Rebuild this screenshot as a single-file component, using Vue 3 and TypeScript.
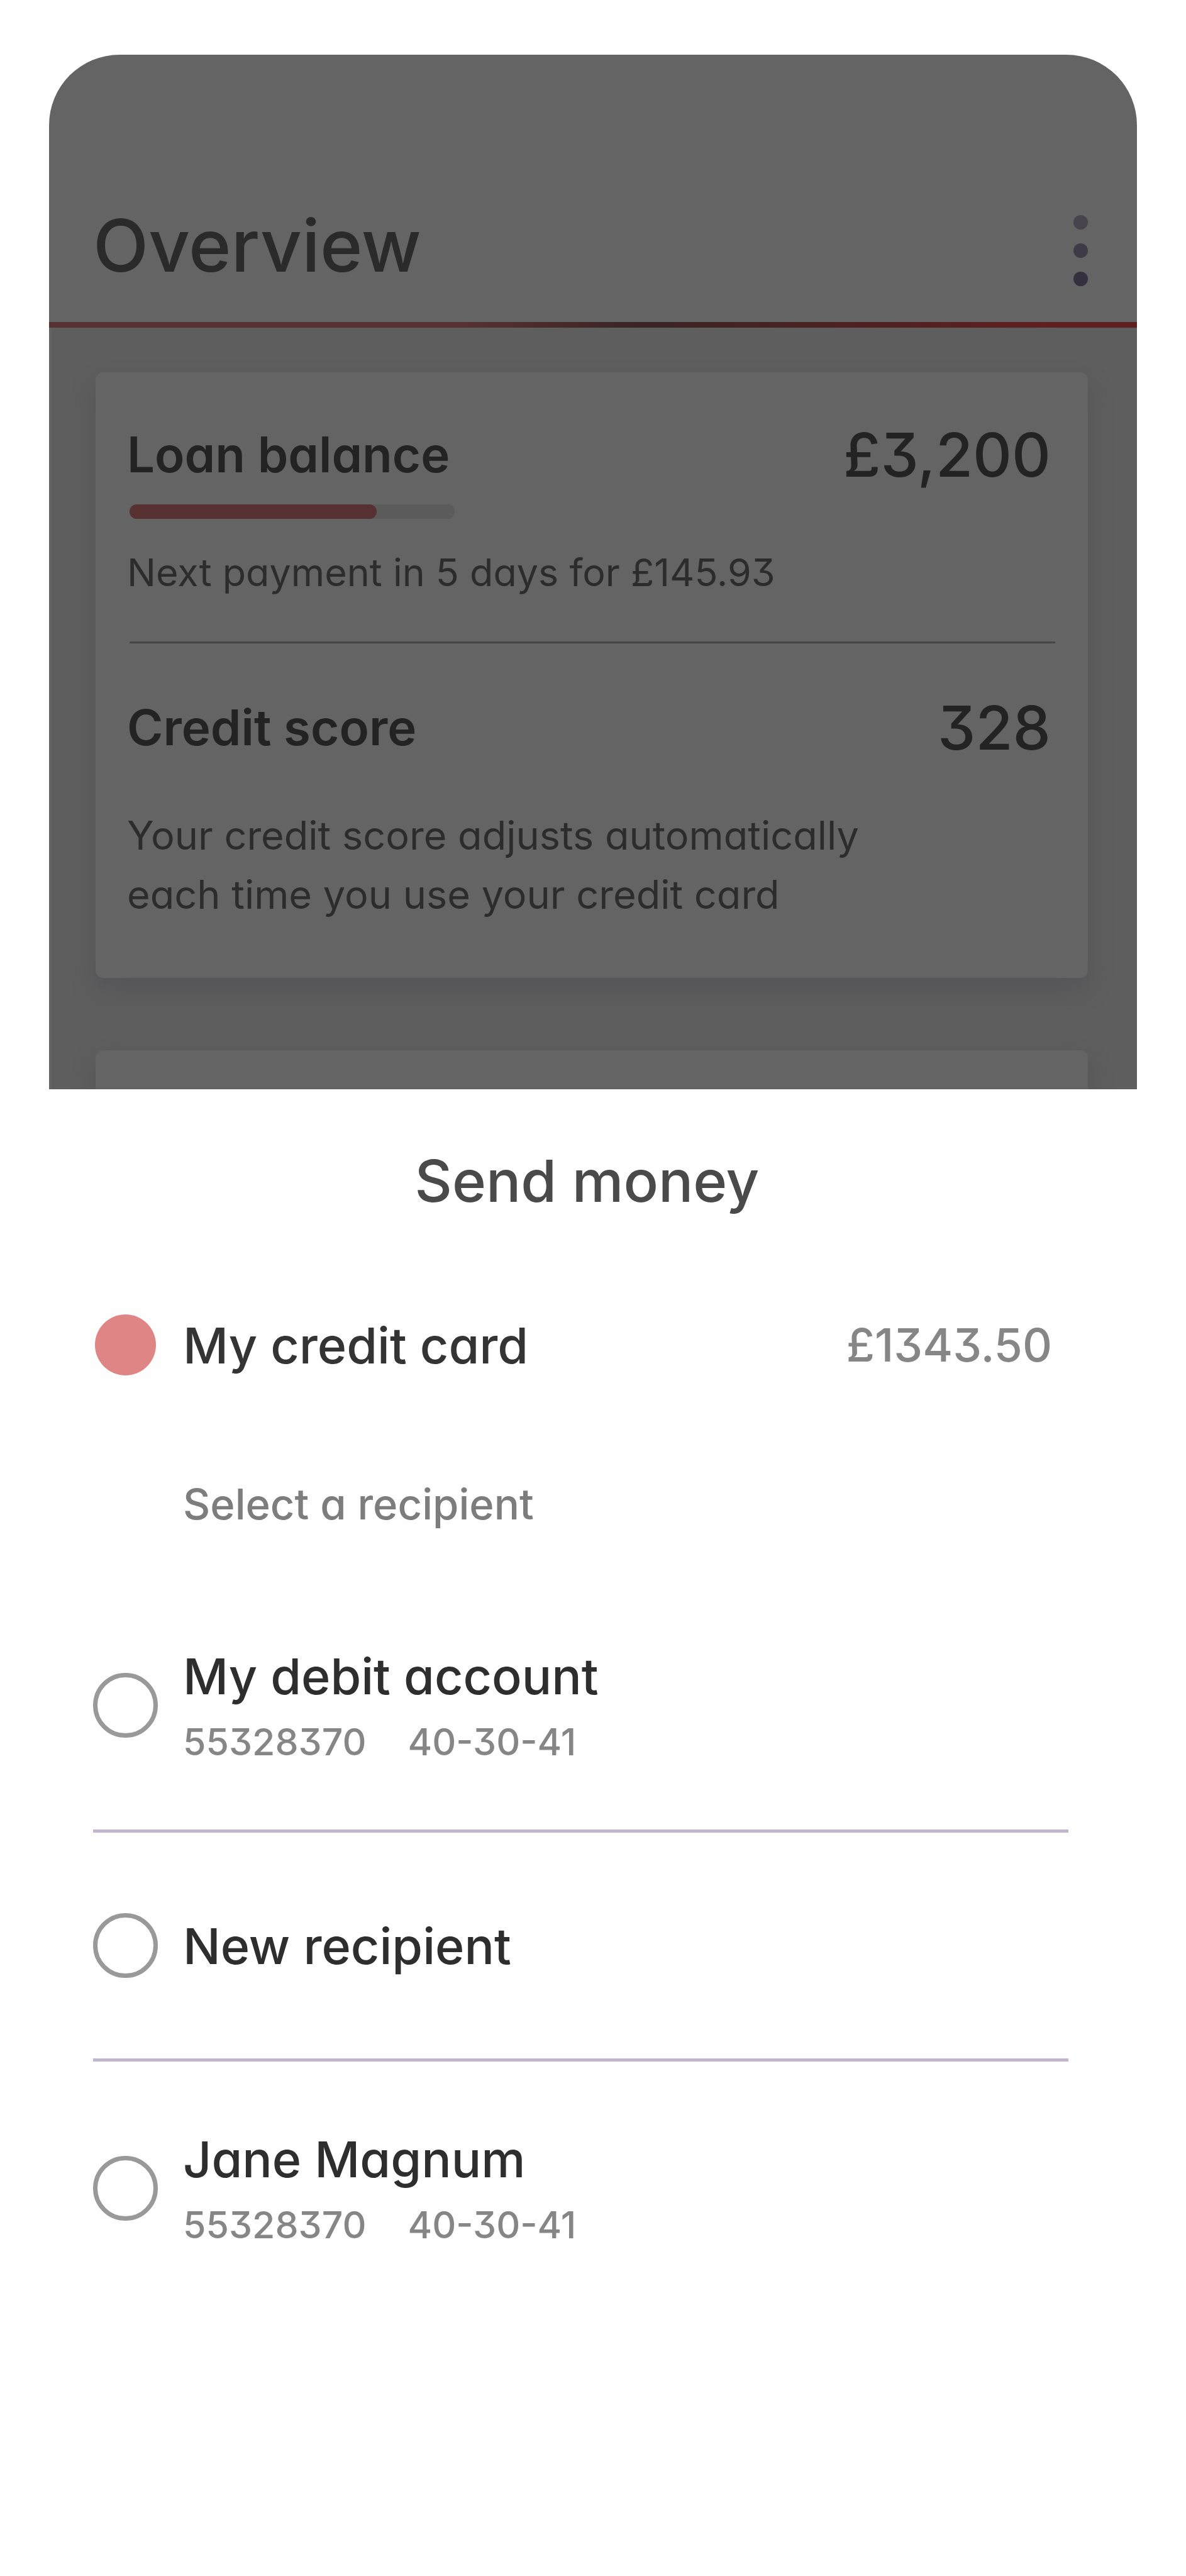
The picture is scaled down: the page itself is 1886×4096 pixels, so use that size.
<script setup lang="ts">
import { ref } from 'vue'

interface Recipient {
  id: string
  name: string
  account?: string
  sortCode?: string
}

const loanPaid = 76

const recipients: Recipient[] = [
  { id: 'debit', name: 'My debit account', account: '55328370', sortCode: '40-30-41' },
  { id: 'new', name: 'New recipient' },
  { id: 'jane', name: 'Jane Magnum', account: '55328370', sortCode: '40-30-41' },
]

const source = ref('credit')
const recipient = ref('')
</script>

<template>
  <main class="page">
    <section class="overview" aria-label="Overview">
      <header class="bar">
        <h1 class="title">Overview</h1>
        <button class="menu" type="button" aria-label="Menu">
          <span class="dot dot-light"></span>
          <span class="dot dot-mid"></span>
          <span class="dot dot-dark"></span>
        </button>
      </header>
      <div class="rule"></div>

      <div class="cards">
        <article class="card">
          <div class="row">
            <h2 class="label">Loan balance</h2>
            <p class="figure">£3,200</p>
          </div>
          <div class="track" role="progressbar" aria-label="Loan repaid" :aria-valuenow="loanPaid">
            <div class="fill" :style="{ width: loanPaid + '%' }"></div>
          </div>
          <p class="note next">Next payment in 5 days for £145.93</p>
          <hr class="divider" />
          <div class="row">
            <h2 class="label">Credit score</h2>
            <p class="figure">328</p>
          </div>
          <p class="note score">Your credit score adjusts automatically<br />each time you use your credit card</p>
        </article>
        <article class="card card-peek"></article>
      </div>
    </section>

    <section class="sheet">
      <h2 class="sheet-title">Send money</h2>

      <label class="option source">
        <input v-model="source" class="radio" type="radio" name="source" value="credit" />
        <span class="name name-source">My credit card</span>
        <span class="amount">£1343.50</span>
      </label>

      <p class="hint">Select a recipient</p>

      <ul class="list">
        <li v-for="r in recipients" :key="r.id" class="item" :class="{ single: !r.account }">
          <label class="option">
            <input v-model="recipient" class="radio" type="radio" name="recipient" :value="r.id" />
            <span class="details">
              <span class="name">{{ r.name }}</span>
              <span v-if="r.account" class="numbers">
                <span>{{ r.account }}</span>
                <span>{{ r.sortCode }}</span>
              </span>
            </span>
          </label>
        </li>
      </ul>
    </section>
  </main>
</template>

<style>
body {
  margin: 0;
  background: #ffffff;
}
</style>

<style scoped>
.page {
  box-sizing: border-box;
  display: flex;
  flex-direction: column;
  min-height: 100vh;
  padding-top: 87px;
  background: #ffffff;
  font-family: Inter, "Open Sans", sans-serif;
  font-feature-settings: "cv11", "cv09";
  font-weight: 500;
}

h1,
h2,
p,
ul {
  margin: 0;
  padding: 0;
  font-weight: 500;
}

.overview {
  flex: none;
  margin: 0 78px;
  border-radius: 112px 112px 0 0;
  overflow: hidden;
  background: #646464;
}

.bar {
  display: flex;
  align-items: flex-end;
  justify-content: space-between;
  padding: 240px 78px 57px 70px;
}

.title {
  font-size: 115px;
  line-height: 128px;
  color: #2a2a2a;
}

.menu {
  display: flex;
  flex-direction: column;
  gap: 22px;
  padding: 0;
  border: 0;
  background: none;
}

.dot {
  width: 23px;
  height: 23px;
  border-radius: 50%;
}

.dot-light {
  background: #47444d;
}

.dot-mid {
  background: #3e3b46;
}

.dot-dark {
  background: #34303f;
}

.rule {
  height: 9px;
  background: linear-gradient(90deg, #573131 0%, #573131 38%, #3a2424 54%, #5f1f1f 93%, #5f1f1f 100%);
}

.cards {
  padding: 71px 78px 0 70px;
  border-left: 4px solid #646464;
  background: #5e5e5e;
}

.card {
  padding: 83px 52px 86px 50px;
  border-radius: 12px;
  background: #646464;
  box-shadow: 0 18px 36px rgba(70, 70, 80, 0.35);
}

.card-peek {
  height: 62px;
  margin-top: 115px;
  padding: 0;
  border-radius: 12px 12px 0 0;
}

.row {
  display: flex;
  justify-content: space-between;
  padding-right: 7px;
}

.label {
  font-size: 78px;
  line-height: 96px;
  font-weight: 600;
  color: #232323;
}

.figure {
  font-size: 96px;
  line-height: 96px;
  color: #232323;
}

.track {
  width: 35%;
  height: 23px;
  margin: 31px 0 0 4px;
  border-radius: 12px;
  background: #5b5b5b;
}

.fill {
  height: 100%;
  border-radius: 12px;
  background: #573131;
}

.note {
  line-height: 94px;
  font-weight: 400;
  color: #2c2c2c;
}

.next {
  margin-top: 38px;
  font-size: 61px;
}

.divider {
  height: 3px;
  margin: 63px 0 86px 4px;
  border: 0;
  background: #464646;
}

.score {
  margin-top: 76px;
  font-size: 63px;
}

.sheet {
  flex: 1;
  padding: 94px 187px 120px 148px;
  background: #fefefe;
}

.sheet-title {
  padding-left: 20px;
  text-align: center;
  font-size: 92px;
  line-height: 104px;
  color: #4a4a4a;
}

.option {
  display: flex;
  align-items: center;
  gap: 40px;
}

.source {
  margin-top: 157px;
  padding-right: 26px;
}

.radio {
  appearance: none;
  box-sizing: border-box;
  flex: none;
  width: 103px;
  height: 103px;
  margin: 0;
  border: 7px solid #999999;
  border-radius: 50%;
}

.radio:checked {
  border: 3px solid transparent;
  background: #e08585;
  background-clip: padding-box;
}

.name {
  font-size: 79px;
  line-height: 96px;
  color: #2e2e2e;
}

.name-source {
  color: #343434;
}

.amount {
  margin-left: auto;
  font-size: 73px;
  line-height: 96px;
  color: #868686;
}

.hint {
  margin: 162px 0 84px;
  padding-left: 143px;
  font-size: 67px;
  line-height: 80px;
  color: #7d7d7d;
}

.list {
  list-style: none;
}

.item {
  padding: 101px 0 103px;
}

.item + .item {
  padding-top: 107px;
  border-top: 5px solid #c4b5cf;
}

.item.single {
  padding: 128px 0;
}

.details {
  display: flex;
  flex-direction: column;
  gap: 21px;
}

.numbers {
  display: flex;
  gap: 66px;
  font-size: 59px;
  line-height: 72px;
  color: #868686;
}
</style>
